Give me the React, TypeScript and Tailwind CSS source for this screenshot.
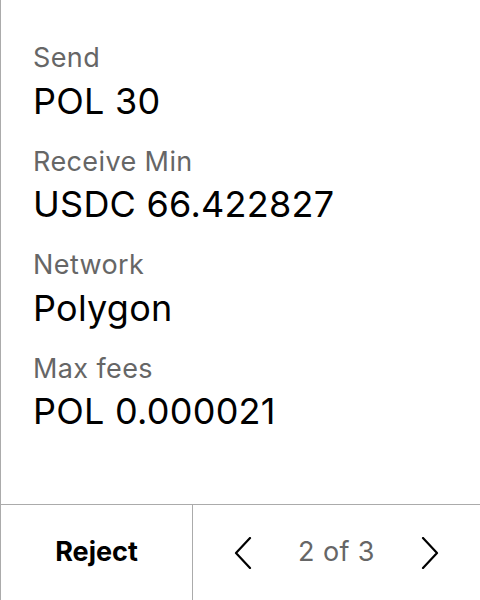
import React from 'react';

const rows = [
  { label: 'Send', value: 'POL 30' },
  { label: 'Receive Min', value: 'USDC 66.422827' },
  { label: 'Network', value: 'Polygon' },
  { label: 'Max fees', value: 'POL 0.000021' },
];

function Chevron({ dir }: { dir: 'left' | 'right' }) {
  return (
    <svg width="18" height="32" viewBox="0 0 18 32" fill="none" className="block">
      <polyline
        points={dir === 'left' ? '16,1 2,16 16,31' : '2,1 16,16 2,31'}
        stroke="#000"
        strokeWidth="2.2"
        strokeLinecap="round"
        strokeLinejoin="round"
      />
    </svg>
  );
}

export default function App() {
  return (
    <div className="flex h-[600px] w-[480px] flex-col border-l border-[#ababab] bg-white font-['Inter',sans-serif]">
      <div className="flex flex-1 flex-col gap-[18px] px-8 pt-[39px]">
        {rows.map((r) => (
          <div key={r.label} className="flex flex-col">
            <div className="text-[27px] leading-[37.5px] tracking-[0.4px] text-[#666666]">{r.label}</div>
            <div className="text-[36px] leading-[48px] tracking-[0.25px] text-black">{r.value}</div>
          </div>
        ))}
      </div>
      <div className="flex h-24 border-t border-[#ababab]">
        <button className="flex w-[192px] items-center justify-center border-r border-[#ababab] text-[27px] font-bold text-black">
          Reject
        </button>
        <div className="flex flex-1 items-center justify-between px-[41px]">
          <Chevron dir="left" />
          <span className="text-[27px] tracking-[0.4px] text-[#666666]">2 of 3</span>
          <Chevron dir="right" />
        </div>
      </div>
    </div>
  );
}
